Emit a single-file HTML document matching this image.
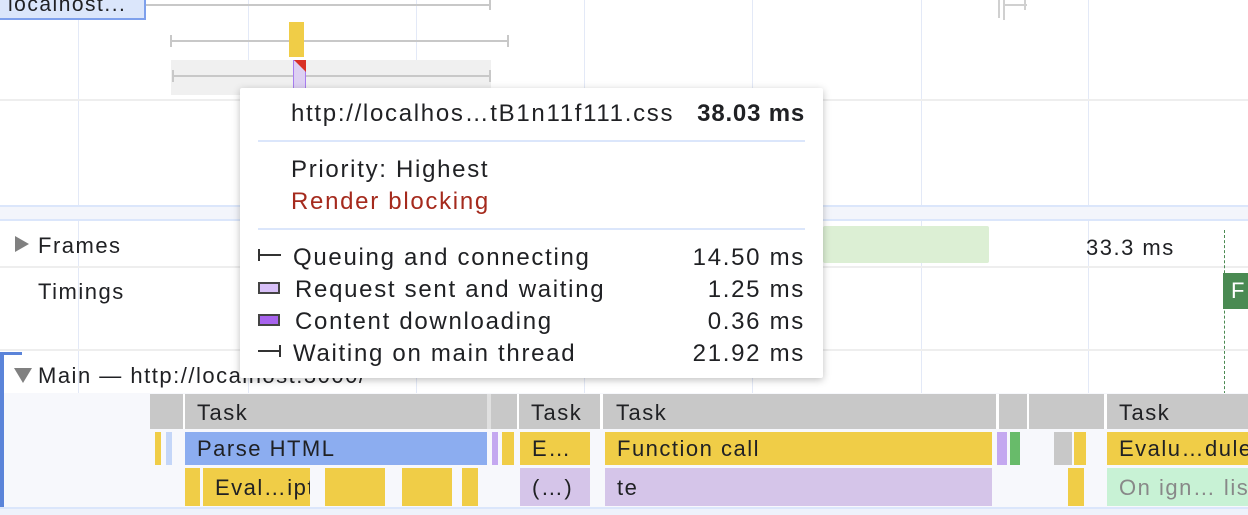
<!DOCTYPE html>
<html><head><style>
*{margin:0;padding:0;box-sizing:border-box}
body{width:1248px;height:515px;overflow:hidden;background:#fff;font-family:"Liberation Sans",sans-serif;color:#202124;position:relative}
.a{position:absolute}
.vl{position:absolute;top:0;width:1px;height:515px;background:#e3e9f7}
.t{position:absolute;font-size:22px;line-height:1;white-space:nowrap;letter-spacing:1.5px}
.c{position:absolute;overflow:hidden;white-space:nowrap;font-size:22px;line-height:1;padding-left:12px;color:#202124;letter-spacing:1.5px}
.tip .r{position:absolute;font-size:24px;line-height:1;white-space:nowrap;letter-spacing:1.7px}
</style></head><body>
<div class="vl" style="left:78px"></div><div class="vl" style="left:248px"></div><div class="vl" style="left:416px"></div><div class="vl" style="left:584px"></div><div class="vl" style="left:752px"></div><div class="vl" style="left:921px"></div><div class="vl" style="left:1088px"></div>

<div class="a" style="left:0;top:-4px;width:146px;height:24px;background:#dbe6fb;border-right:2px solid #7ea0ec;border-bottom:2px solid #7ea0ec"></div>
<div class="t" style="left:8px;top:-6px;font-size:21px">localhost...</div>
<div class="a" style="left:146px;top:4px;width:344px;height:2px;background:#c8c8c8"></div>
<div class="a" style="left:489px;top:0;width:2px;height:10px;background:#c8c8c8"></div>
<div class="a" style="left:998px;top:0;width:2px;height:18px;background:#d0d0d0"></div>
<div class="a" style="left:1003px;top:0;width:2px;height:20px;background:#d0d0d0"></div>
<div class="a" style="left:1003px;top:4px;width:24px;height:2px;background:#d0d0d0"></div>
<div class="a" style="left:1024px;top:0;width:2px;height:10px;background:#d0d0d0"></div>

<div class="a" style="left:171px;top:40px;width:337px;height:2px;background:#c8c8c8"></div>
<div class="a" style="left:170px;top:35px;width:2px;height:12px;background:#c8c8c8"></div>
<div class="a" style="left:507px;top:35px;width:2px;height:12px;background:#c8c8c8"></div>
<div class="a" style="left:289px;top:22px;width:15px;height:35px;background:#f0cd47"></div>

<div class="a" style="left:171px;top:60px;width:320px;height:35px;background:#f0f0f0"></div>
<div class="a" style="left:172px;top:75px;width:318px;height:2px;background:#c8c8c8"></div>
<div class="a" style="left:172px;top:70px;width:2px;height:12px;background:#c8c8c8"></div>
<div class="a" style="left:489px;top:70px;width:2px;height:12px;background:#c8c8c8"></div>
<div class="a" style="left:293px;top:60px;width:13px;height:35px;background:#ddd0f2;border:1px solid #a77cf0"></div>
<svg class="a" style="left:294px;top:60px" width="12" height="12"><polygon points="0,0 12,0 12,12" fill="#d93025"/></svg>

<div class="a" style="left:0;top:99px;width:1248px;height:2px;background:#eee"></div>

<div class="a" style="left:0;top:205px;width:1248px;height:16px;background:#f3f5fb;border-top:2px solid #dbe6fb;border-bottom:2px solid #dbe6fb"></div>

<svg class="a" style="left:15px;top:236px" width="16" height="18"><polygon points="0,0 14,8 0,16" fill="#808080"/></svg>
<div class="t" style="left:38px;top:235px">Frames</div>
<div class="a" style="left:823px;top:226px;width:166px;height:37px;background:#dcefd4;border-radius:2px"></div>
<div class="t" style="left:1086px;top:237px">33.3 ms</div>
<div class="a" style="left:0;top:266px;width:1248px;height:2px;background:#eee"></div>
<div class="t" style="left:38px;top:281px">Timings</div>
<div class="a" style="left:1224px;top:230px;width:0;height:285px;border-left:1px dashed #4a8a52"></div>
<div class="a" style="left:1223px;top:273px;width:30px;height:36px;background:#4a8a52"></div>
<div class="t" style="left:1231px;top:280px;color:#fff">F</div>
<div class="a" style="left:0;top:349px;width:1248px;height:2px;background:#eee"></div>

<div class="a" style="left:0;top:352px;width:4px;height:163px;background:#5b84d9"></div>
<div class="a" style="left:0;top:352px;width:22px;height:3px;background:#5b84d9"></div>
<svg class="a" style="left:14px;top:368px" width="20" height="16"><polygon points="0,0 18,0 9,15" fill="#808080"/></svg>
<div class="t" style="left:38px;top:365px">Main — http://localhost:3000/</div>
<div class="a" style="left:4px;top:393px;width:1244px;height:115px;background:#f7f8fc"></div>

<div class="a" style="left:150px;top:394px;width:1098px;height:35px;background:#c8c8c8"></div>
<div class="a" style="left:183px;top:394px;width:2px;height:35px;background:#fff"></div>
<div class="a" style="left:487px;top:394px;width:4px;height:35px;background:#e0e0e0"></div>
<div class="a" style="left:517px;top:394px;width:2px;height:35px;background:#fff"></div>
<div class="a" style="left:600px;top:394px;width:3px;height:35px;background:#fff"></div>
<div class="a" style="left:996px;top:394px;width:3px;height:35px;background:#fff"></div>
<div class="a" style="left:1027px;top:394px;width:2px;height:35px;background:#fff"></div>
<div class="a" style="left:1104px;top:394px;width:3px;height:35px;background:#fff"></div>
<div class="c" style="left:185px;top:402px">Task</div>
<div class="c" style="left:519px;top:402px">Task</div>
<div class="c" style="left:604px;top:402px">Task</div>
<div class="c" style="left:1107px;top:402px">Task</div>

<div class="a" style="left:155px;top:432px;width:6px;height:33px;background:#f0cd47"></div>
<div class="a" style="left:166px;top:432px;width:6px;height:33px;background:#c4d6f8"></div>
<div class="c" style="left:185px;top:432px;width:302px;height:33px;background:#8cadf0;padding-top:6px">Parse HTML</div>
<div class="a" style="left:492px;top:432px;width:6px;height:33px;background:#c4a8f0"></div>
<div class="a" style="left:502px;top:432px;width:12px;height:33px;background:#f0cd47"></div>
<div class="c" style="left:520px;top:432px;width:70px;height:33px;background:#f0cd47;padding-top:6px">E…</div>
<div class="c" style="left:605px;top:432px;width:387px;height:33px;background:#f0cd47;padding-top:6px">Function call</div>
<div class="a" style="left:997px;top:432px;width:10px;height:33px;background:#c4a8f0"></div>
<div class="a" style="left:1010px;top:432px;width:10px;height:33px;background:#68bb6a"></div>
<div class="a" style="left:1054px;top:432px;width:18px;height:33px;background:#c8c8c8"></div>
<div class="a" style="left:1074px;top:432px;width:12px;height:33px;background:#f0cd47"></div>
<div class="c" style="left:1107px;top:432px;width:141px;height:33px;background:#f0cd47;padding-top:6px">Evalu…dule</div>

<div class="a" style="left:185px;top:468px;width:15px;height:38px;background:#f0cd47"></div>
<div class="c" style="left:203px;top:468px;width:107px;height:38px;background:#f0cd47;padding-top:9px">Eval…ipt</div>
<div class="a" style="left:325px;top:468px;width:60px;height:38px;background:#f0cd47"></div>
<div class="a" style="left:402px;top:468px;width:50px;height:38px;background:#f0cd47"></div>
<div class="a" style="left:462px;top:468px;width:16px;height:38px;background:#f0cd47"></div>
<div class="c" style="left:520px;top:468px;width:70px;height:38px;background:#d5c5e9;padding-top:9px">(…)</div>
<div class="c" style="left:605px;top:468px;width:387px;height:38px;background:#d5c5e9;padding-top:9px">te</div>
<div class="a" style="left:1068px;top:468px;width:16px;height:38px;background:#f0cd47"></div>
<div class="c" style="left:1107px;top:468px;width:141px;height:38px;background:#c8f2d5;padding-top:9px;color:#888">On ign… list</div>
<div class="a" style="left:0;top:507px;width:1248px;height:8px;background:#eef2fb;border-top:2px solid #dbe6fb"></div>

<div class="a tip" style="left:240px;top:88px;width:583px;height:290px;background:#fff;box-shadow:0 2px 8px rgba(0,0,0,.25);border-radius:2px">
<div class="r" style="left:51px;top:14px">http://localhos…tB1n11f111.css</div>
<div class="r" style="right:18px;top:14px;font-weight:bold;letter-spacing:0.8px">38.03 ms</div>
<div class="a" style="left:18px;top:52px;width:547px;height:2px;background:#dbe6fb"></div>
<div class="r" style="left:51px;top:70px">Priority: Highest</div>
<div class="r" style="left:51px;top:102px;color:#a52a1d">Render blocking</div>
<div class="a" style="left:18px;top:140px;width:547px;height:2px;background:#dbe6fb"></div>
<svg class="a" style="left:18px;top:160px" width="24" height="14"><path d="M1 1V13M1 7H23" stroke="#333" stroke-width="2"/></svg>
<div class="a" style="left:18px;top:194px;width:22px;height:12px;background:#d8c0f8;border:2px solid #444"></div>
<div class="a" style="left:18px;top:226px;width:22px;height:12px;background:#a763ed;border:2px solid #444"></div>
<svg class="a" style="left:18px;top:256px" width="24" height="14"><path d="M0 7H22M22 1V13" stroke="#333" stroke-width="2"/></svg>
<div class="r" style="left:53px;top:158px">Queuing and connecting</div>
<div class="r" style="left:55px;top:190px">Request sent and waiting</div>
<div class="r" style="left:55px;top:222px">Content downloading</div>
<div class="r" style="left:53px;top:254px">Waiting on main thread</div>
<div class="r" style="right:18px;top:158px">14.50 ms</div>
<div class="r" style="right:18px;top:190px">1.25 ms</div>
<div class="r" style="right:18px;top:222px">0.36 ms</div>
<div class="r" style="right:18px;top:254px">21.92 ms</div>
</div>
</body></html>
